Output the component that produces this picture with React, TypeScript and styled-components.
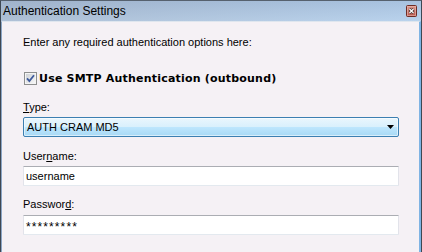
import React from "react";
import styled, { createGlobalStyle } from "styled-components";

const GlobalStyle = createGlobalStyle`
  html, body {
    margin: 0;
    padding: 0;
    overflow: hidden;
    background: #f5f1f5;
  }
  body {
    font-family: "Liberation Sans", Arial, sans-serif;
    font-size: 11px;
    color: #000;
  }
`;

const Window = styled.div`
  width: 422px;
  height: 252px;
  box-sizing: border-box;
  display: flex;
  flex-direction: column;
  border-top: 1px solid #56616e;
  border-left: 1px solid #3e4853;
  border-right: 1px solid #3e4853;
  background: #f5f1f5;
  overflow: hidden;
`;

const TitleBar = styled.div`
  height: 20px;
  flex-shrink: 0;
  display: flex;
  align-items: center;
  justify-content: space-between;
  padding: 0 4px 0 2px;
  background: linear-gradient(to right, rgba(165, 180, 200, 0.55), rgba(185, 215, 245, 0.45)),
    linear-gradient(to bottom, #9ab1ce, #bacfe6);
`;

const Title = styled.span`
  font-size: 12px;
  line-height: 14px;
  color: #000;
`;

const CloseButton = styled.div`
  width: 11px;
  height: 12px;
  display: flex;
`;

const Body = styled.div`
  flex: 1;
  display: flex;
  flex-direction: column;
  padding: 13px 20px 0 21px;
  border-left: 1px solid #8ba6c6;
  border-right: 2px solid #7fb4e4;
  border-top: 1px solid #dfe6ee;
`;

const Description = styled.div`
  line-height: 14px;
`;

const CheckRow = styled.label`
  display: flex;
  align-items: center;
  gap: 2px;
  height: 14px;
  margin-top: 22px;
  padding-left: 1px;
`;

const CheckLabel = styled.span`
  font-family: "DejaVu Sans", Verdana, sans-serif;
  font-weight: bold;
  font-size: 11px;
  letter-spacing: 0.2px;
`;

const FieldLabel = styled.div<{ $gap: number }>`
  line-height: 14px;
  margin-top: ${(p) => p.$gap}px;
`;

const Select = styled.div`
  height: 20px;
  box-sizing: border-box;
  margin-top: 3px;
  display: flex;
  align-items: center;
  justify-content: space-between;
  padding: 0 4px 0 3px;
  border: 1px solid #3c7fb1;
  border-radius: 2px;
  box-shadow: inset 0 0 0 1px rgba(255, 255, 255, 0.55);
  background: linear-gradient(to bottom, #eaf6fd 0%, #d9f0fc 50%, #bee6fd 51%, #a7d9f5 100%);
`;

const TextBox = styled.div<{ $gap: number }>`
  height: 20px;
  box-sizing: border-box;
  margin-top: ${(p) => p.$gap}px;
  display: flex;
  align-items: center;
  padding: 0 2px;
  background: #fff;
  border: 1px solid #e2e3ea;
  border-top-color: #abadb3;
  border-bottom-color: #e3e9ef;
  border-radius: 1px;
`;

const Masked = styled.span`
  font-size: 12px;
  letter-spacing: 1.1px;
  padding-top: 3px;
`;

const CloseIcon = () => (
  <svg width="11" height="12" viewBox="0 0 11 12">
    <defs>
      <linearGradient id="closeGrad" x1="0" y1="0" x2="0" y2="1">
        <stop offset="0" stopColor="#dc9a8f" />
        <stop offset="1" stopColor="#b9544a" />
      </linearGradient>
    </defs>
    <rect x="0.5" y="0.5" width="10" height="11" rx="1" fill="url(#closeGrad)" stroke="#6e2c25" />
    <rect x="1.5" y="1.5" width="8" height="9" fill="none" stroke="#e8b9b0" strokeOpacity="0.6" />
    <path d="M3.5 4 L7.5 8 M7.5 4 L3.5 8" stroke="#3a2b2b" strokeWidth="2.6" />
    <path d="M3.5 4 L7.5 8 M7.5 4 L3.5 8" stroke="#fff" strokeWidth="1.3" />
  </svg>
);

const CheckIcon = () => (
  <svg width="13" height="13" viewBox="0 0 13 13">
    <defs>
      <linearGradient id="boxGrad" x1="0" y1="0" x2="1" y2="1">
        <stop offset="0" stopColor="#cfd2d6" />
        <stop offset="1" stopColor="#f7f7f7" />
      </linearGradient>
    </defs>
    <rect x="0.5" y="0.5" width="12" height="12" fill="#f4f4f4" stroke="#8e8f8f" />
    <rect x="2" y="2" width="9" height="9" fill="url(#boxGrad)" />
    <path d="M3 6.3 L5.4 9 L10 3.3" fill="none" stroke="#3e5a9c" strokeWidth="1.8" />
  </svg>
);

const ArrowIcon = () => (
  <svg width="7" height="4" viewBox="0 0 7 4">
    <polygon points="0,0 7,0 3.5,4" fill="#000" />
  </svg>
);

export default function App() {
  return (
    <>
      <GlobalStyle />
      <Window>
        <TitleBar>
          <Title>Authentication Settings</Title>
          <CloseButton>
            <CloseIcon />
          </CloseButton>
        </TitleBar>
        <Body>
          <Description>Enter any required authentication options here:</Description>
          <CheckRow>
            <CheckIcon />
            <CheckLabel>Use SMTP Authentication (outbound)</CheckLabel>
          </CheckRow>
          <FieldLabel $gap={15}>
            <u>T</u>ype:
          </FieldLabel>
          <Select>
            <span>AUTH CRAM MD5</span>
            <ArrowIcon />
          </Select>
          <FieldLabel $gap={12}>
            User<u>n</u>ame:
          </FieldLabel>
          <TextBox $gap={3}>username</TextBox>
          <FieldLabel $gap={11}>
            Passwor<u>d</u>:
          </FieldLabel>
          <TextBox $gap={4}>
            <Masked>*********</Masked>
          </TextBox>
        </Body>
      </Window>
    </>
  );
}
